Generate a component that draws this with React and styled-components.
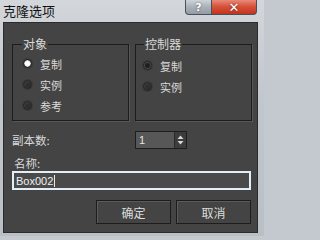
import React from 'react';
import styled, { createGlobalStyle } from 'styled-components';

const GlobalStyle = createGlobalStyle`
  html, body { margin: 0; padding: 0; background: #c4c9cf; }
  body { width: 264px; height: 236px; overflow: hidden; }
`;

const cjk = `"Noto Sans CJK SC", "Liberation Sans", sans-serif`;

const Window = styled.div`
  width: 264px;
  height: 236px;
  display: flex;
  flex-direction: column;
  background: linear-gradient(180deg, #d3d7dc 0%, #c2c7cd 40%, #b9bfc5 100%);
  font-family: ${cjk};
`;

const TitleBar = styled.div`
  height: 22px;
  flex: none;
  display: flex;
  align-items: flex-start;
  padding-left: 3px;
  padding-right: 7px;
`;

const Title = styled.div`
  flex: 1;
  font-size: 13px;
  line-height: 13px;
  color: #111;
  padding-top: 4px;
`;

const CaptionButton = styled.div`
  height: 15px;
  display: flex;
  align-items: center;
  justify-content: center;
  box-sizing: border-box;
  border: 1px solid #4a5058;
  border-top: none;
  color: #fff;
  font-family: "DejaVu Sans", sans-serif;
  font-weight: bold;
  font-size: ${p => (p.$close ? '13px' : '11px')};
  width: ${p => (p.$close ? '45px' : '27px')};
  border-radius: ${p => (p.$close ? '0 0 4px 0' : '0 0 0 4px')};
  border-left: ${p => (p.$close ? 'none' : '1px solid #4a5058')};
  background: ${p =>
    p.$close
      ? 'linear-gradient(180deg, #e88a78 0%, #d6533c 45%, #c4321e 100%)'
      : 'linear-gradient(180deg, #cfd4da 0%, #a9b0b8 50%, #959ca5 100%)'};
  text-shadow: 0 0 2px rgba(0, 0, 0, 0.6);
`;

const Body = styled.div`
  flex: 1;
  margin: 0 6px 3px 3px;
  background: #444444;
  border: 1px solid #2b2b2b;
  box-sizing: border-box;
  padding: 15px 6px 0 8px;
  display: flex;
  flex-direction: column;
  color: #dadada;
  font-size: 11px;
`;

const Groups = styled.div`
  display: grid;
  grid-template-columns: 117px 117px;
  column-gap: 6px;
`;

const Group = styled.fieldset`
  margin: 0;
  height: 83px;
  box-sizing: border-box;
  border: 1px solid #1c1c1c;
  box-shadow: 1px 1px 0 #575757;
  padding: ${p => p.$top || 3}px 0 0 ${p => p.$left || 10}px;
  min-width: 0;
`;

const Legend = styled.legend`
  font-size: 12px;
  line-height: 12px;
  padding: 0 1px;
  margin-left: ${p => p.$shift || -1}px;
  color: #dadada;
`;

const RadioRow = styled.label`
  height: 21px;
  display: flex;
  align-items: center;
  gap: 8px;
  font-size: 11px;
`;

const RadioDot = styled.span`
  width: 9px;
  height: 9px;
  border-radius: 50%;
  box-sizing: border-box;
  border: 1px solid #232323;
  background: ${p =>
    p.$on
      ? p.$bright
        ? 'radial-gradient(circle, #ffffff 0 2px, #cfcfcf 3px, #3a3a3a 4px)'
        : 'radial-gradient(circle, #1e1e1e 0 2px, #4a4a4a 3px)'
      : 'radial-gradient(circle at 60% 60%, #2e2e2e 0 2px, #3d3d3d 4px)'};
  box-shadow: 0 0 0 1px #3a3a3a;
`;

const Row = styled.div`
  display: flex;
  align-items: center;
  height: 18px;
  margin-top: ${p => p.$top || 0}px;
`;

const FieldLabel = styled.div`
  width: 123px;
  font-size: 11.5px;
  line-height: 12px;
`;

const Spinner = styled.div`
  display: flex;
  height: 18px;
  border: 1px solid #1e1e1e;
  box-sizing: border-box;
`;

const SpinInput = styled.div`
  width: 39px;
  background: #575757;
  border-right: 1px solid #2a2a2a;
  font-family: "Liberation Sans", sans-serif;
  font-size: 11px;
  line-height: 16px;
  padding-left: 3px;
  box-sizing: border-box;
  color: #e6e6e6;
`;

const SpinArrows = styled.div`
  width: 11px;
  display: flex;
  align-items: center;
  justify-content: center;
  background: #3c3c3c;
`;

const NameLabel = styled.div`
  font-size: 11.5px;
  line-height: 12px;
  margin: 8px 0 0 2px;
`;

const NameInput = styled.div`
  margin-top: 2px;
  width: 239px;
  height: 19px;
  box-sizing: border-box;
  border: 2px solid #e2eef8;
  background: #4a4a4a;
  display: flex;
  align-items: center;
  padding-left: 2px;
  font-family: "Liberation Sans", sans-serif;
  font-size: 11px;
  color: #f0f0f0;
`;

const Caret = styled.span`
  width: 1px;
  height: 12px;
  background: #e8e8e8;
  margin-left: 1px;
`;

const Buttons = styled.div`
  display: flex;
  justify-content: flex-end;
  gap: 5px;
  margin-top: 10px;
`;

const Button = styled.div`
  width: 75px;
  height: 24px;
  box-sizing: border-box;
  border: 1px solid #1d1d1d;
  box-shadow: inset 1px 1px 0 #5b5b5b;
  display: flex;
  align-items: center;
  justify-content: center;
  font-size: 12px;
  color: #dcdcdc;
`;

const Radio = ({ on, bright, children }) => (
  <RadioRow>
    <RadioDot $on={on} $bright={bright} />
    {children}
  </RadioRow>
);

export default function App() {
  return (
    <>
      <GlobalStyle />
      <Window>
        <TitleBar>
          <Title>克隆选项</Title>
          <CaptionButton>?</CaptionButton>
          <CaptionButton $close>✕</CaptionButton>
        </TitleBar>
        <Body>
          <Groups>
            <Group>
              <Legend>对象</Legend>
              <Radio on bright>复制</Radio>
              <Radio>实例</Radio>
              <Radio>参考</Radio>
            </Group>
            <Group $left={7} $top={5}>
              <Legend $shift={1}>控制器</Legend>
              <Radio on>复制</Radio>
              <Radio>实例</Radio>
            </Group>
          </Groups>
          <Row $top={10}>
            <FieldLabel>副本数:</FieldLabel>
            <Spinner>
              <SpinInput>1</SpinInput>
              <SpinArrows>
                <svg width="7" height="10" viewBox="0 0 7 10">
                  <path d="M3.5 0.5 L6.5 4 L0.5 4 Z" fill="#d8d8d8" />
                  <path d="M0.5 6 L6.5 6 L3.5 9.5 Z" fill="#d8d8d8" />
                </svg>
              </SpinArrows>
            </Spinner>
          </Row>
          <NameLabel>名称:</NameLabel>
          <NameInput>
            Box002
            <Caret />
          </NameInput>
          <Buttons>
            <Button>确定</Button>
            <Button>取消</Button>
          </Buttons>
        </Body>
      </Window>
    </>
  );
}
